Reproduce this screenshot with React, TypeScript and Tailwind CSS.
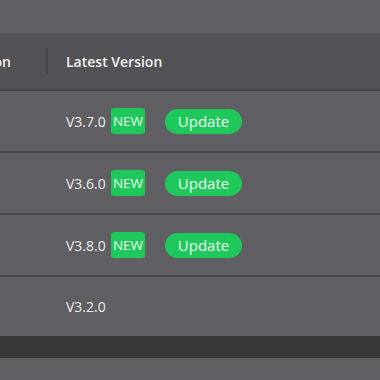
import React from "react";

const rows = [
  { v: "V3.7.0", isNew: true },
  { v: "V3.6.0", isNew: true },
  { v: "V3.8.0", isNew: true },
  { v: "V3.2.0", isNew: false },
];

export default function App() {
  return (
    <div
      className="w-[380px] h-[380px] overflow-hidden bg-[#605f64] text-[#eeeeee]"
      style={{ fontFamily: '"Open Sans", "Noto Sans", sans-serif' }}
    >
      <div className="h-[33px] bg-[#605f64]" />
      <div className="h-[58px] bg-[#535256] border-b-2 border-[#434246] flex items-center">
        <div className="w-[48px] flex items-center justify-end relative h-full">
          <span className="absolute right-[37px] text-[14px] font-semibold text-[#f0f0f0]">Version</span>
          <div className="absolute right-0 top-[15px] w-[2px] h-[26px] bg-[#48474b]" />
        </div>
        <div className="pl-[18px] text-[14px] font-semibold text-[#f0f0f0]">Latest Version</div>
      </div>
      {rows.map((r, i) => (
        <div
          key={i}
          className={`bg-[#605f64] flex items-center pl-[66px] ${
            i < rows.length - 1 ? "h-[62px] border-b-2 border-[#49484c]" : "h-[59px]"
          }`}
        >
          <span className="text-[14px] text-[#ececec] w-[45px]">{r.v}</span>
          {r.isNew && (
            <>
              <span className="h-[26px] w-[34px] rounded-[3px] bg-[#1ec85a] text-[#e8fbe8] text-[13.5px] font-medium flex items-center justify-center">
                NEW
              </span>
              <button className="ml-[20px] h-[25px] w-[77px] rounded-full bg-[#1ec85a] text-[#eefcef] text-[15px] flex items-center justify-center">
                Update
              </button>
            </>
          )}
        </div>
      ))}
      <div className="h-[22px] bg-[#39383b]" />
      <div className="h-[30px] bg-[#605f64]" />
    </div>
  );
}
